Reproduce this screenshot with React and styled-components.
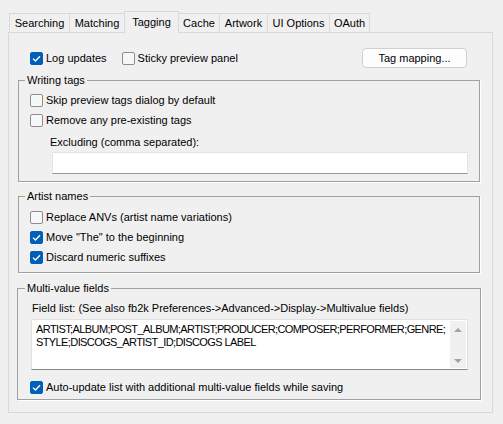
import React from "react";
import styled, { createGlobalStyle } from "styled-components";

const Global = createGlobalStyle`
  html, body { margin: 0; padding: 0; background: #f0f0f0; }
  body {
    font-family: "Liberation Sans", Arial, sans-serif;
    font-size: 11px;
    color: #000;
  }
  * { box-sizing: border-box; }
`;

const Window = styled.div`
  width: 503px;
  height: 424px;
  padding: 11px 0 0 8px;
`;

const TabStrip = styled.div`
  display: flex;
  align-items: flex-end;
  height: 21px;
  padding-left: 1px;
  position: relative;
  z-index: 1;
`;

const Tab = styled.div`
  width: ${(p) => p.$w}px;
  height: ${(p) => (p.$active ? 22 : 19)}px;
  margin-left: -1px;
  margin-bottom: ${(p) => (p.$active ? -1 : 0)}px;
  padding-bottom: ${(p) => (p.$active ? 2 : 0)}px;
  border: 1px solid #d9d9d9;
  border-bottom: none;
  background: #f0f0f0;
  display: flex;
  align-items: center;
  justify-content: center;
  white-space: nowrap;
  &:first-child { margin-left: 0; }
`;

const Panel = styled.div`
  width: 485px;
  height: 381px;
  border: 1px solid #d9d9d9;
  padding: 0 12px 0 9px;
  display: flex;
  flex-direction: column;
`;

const TopRow = styled.div`
  margin-top: 15px;
  height: 20px;
  display: flex;
  align-items: center;
  gap: 15px;
  padding: 0 13px 0 12px;
`;

const Check = styled.label`
  display: flex;
  align-items: center;
  gap: 3px;
  height: 20px;
  margin-top: ${(p) => p.$mt || 0}px;
  white-space: nowrap;
`;

const Box = styled.span`
  width: 13px;
  height: 13px;
  border-radius: 2px;
  border: 1px solid ${(p) => (p.$on ? "#005fb8" : "#8d8d8d")};
  background: ${(p) => (p.$on ? "#005fb8" : "#f7f7f7")};
  display: flex;
  align-items: center;
  justify-content: center;
  flex: none;
`;

const Button = styled.button`
  margin-left: auto;
  width: 105px;
  height: 20px;
  border: 1px solid #d0d0d0;
  border-radius: 4px;
  background: #fdfdfd;
  font: inherit;
  color: #000;
  padding: 0;
`;

const Group = styled.div`
  position: relative;
  margin: ${(p) => p.$mt}px ${(p) => (p.$wide ? -1 : 0)}px 0;
  border: 1px solid #a0a0a0;
  box-shadow: 1px 1px 0 #fff;
  padding: ${(p) => p.$pad};
  display: flex;
  flex-direction: column;
`;

const Caption = styled.span`
  position: absolute;
  top: -7px;
  left: ${(p) => p.$left || 6}px;
  padding: 0 2px;
  line-height: 13px;
  background: #f0f0f0;
`;

const Label = styled.div`
  line-height: 14px;
  margin: ${(p) => p.$m};
  white-space: nowrap;
`;

const Input = styled.div`
  height: 22px;
  margin: 3px 0 0 22px;
  background: #fff;
  border: 1px solid #e4e4e4;
  border-bottom-color: #9a9a9a;
`;

const TextArea = styled.div`
  height: 51px;
  margin: 4px 0 0 1px;
  background: #fff;
  border: 1px solid #e0e0e0;
  border-bottom-color: #8a8a8a;
  display: flex;
`;

const AreaText = styled.div`
  flex: 1;
  padding: 3px 0 0 4px;
  line-height: 13px;
  letter-spacing: -0.6px;
  white-space: nowrap;
  overflow: hidden;
`;

const ScrollBar = styled.div`
  width: 16px;
  margin: 1px 1px 1px 0;
  background: #f0f0f0;
  display: flex;
  flex-direction: column;
  justify-content: space-between;
  align-items: center;
  padding: 7px 0 5px;
`;

const CheckMark = () => (
  <svg width="11" height="11" viewBox="0 0 11 11">
    <path d="M2 5.6 L4.4 8 L9 3.2" fill="none" stroke="#fff" strokeWidth="1.3" />
  </svg>
);

const CheckBox = ({ on, children, mt }) => (
  <Check $mt={mt}>
    <Box $on={on}>{on && <CheckMark />}</Box>
    <span>{children}</span>
  </Check>
);

const Arrow = ({ down }) => (
  <svg width="8" height="4" viewBox="0 0 8 4">
    <path d={down ? "M0 0 L8 0 L4 4 Z" : "M0 4 L8 4 L4 0 Z"} fill="#a3a3a3" />
  </svg>
);

const tabs = [
  ["Searching", 61],
  ["Matching", 56],
  ["Tagging", 55],
  ["Cache", 42],
  ["Artwork", 49],
  ["UI Options", 63],
  ["OAuth", 41],
];

export default function App() {
  return (
    <>
      <Global />
      <Window>
        <TabStrip>
          {tabs.map(([t, w]) => (
            <Tab key={t} $w={w} $active={t === "Tagging"}>
              {t}
            </Tab>
          ))}
        </TabStrip>
        <Panel>
          <TopRow>
            <CheckBox on>Log updates</CheckBox>
            <CheckBox>Sticky preview panel</CheckBox>
            <Button>Tag mapping...</Button>
          </TopRow>

          <Group $mt={12} $pad="9px 11px 7px 11px">
            <Caption>Writing tags</Caption>
            <CheckBox>Skip preview tags dialog by default</CheckBox>
            <CheckBox>Remove any pre-existing tags</CheckBox>
            <Label $m="5px 0 0 20px">Excluding (comma separated):</Label>
            <Input />
          </Group>

          <Group $mt={14} $pad="10px 11px 5px 11px">
            <Caption>Artist names</Caption>
            <CheckBox>Replace ANVs (artist name variations)</CheckBox>
            <CheckBox on>Move "The" to the beginning</CheckBox>
            <CheckBox on>Discard numeric suffixes</CheckBox>
          </Group>

          <Group $mt={15} $wide $pad="12px 12px 2px 12px">
            <Caption $left={7}>Multi-value fields</Caption>
            <Label $m="0 0 0 2px">
              Field list: (See also fb2k Preferences-&gt;Advanced-&gt;Display-&gt;Multivalue fields)
            </Label>
            <TextArea>
              <AreaText>
                <div>ARTIST;ALBUM;POST_ALBUM;ARTIST;PRODUCER;COMPOSER;PERFORMER;GENRE;</div>
                <div>STYLE;DISCOGS_ARTIST_ID;DISCOGS LABEL</div>
              </AreaText>
              <ScrollBar>
                <Arrow />
                <Arrow down />
              </ScrollBar>
            </TextArea>
            <CheckBox on mt={7}>
              Auto-update list with additional multi-value fields while saving
            </CheckBox>
          </Group>
        </Panel>
      </Window>
    </>
  );
}
